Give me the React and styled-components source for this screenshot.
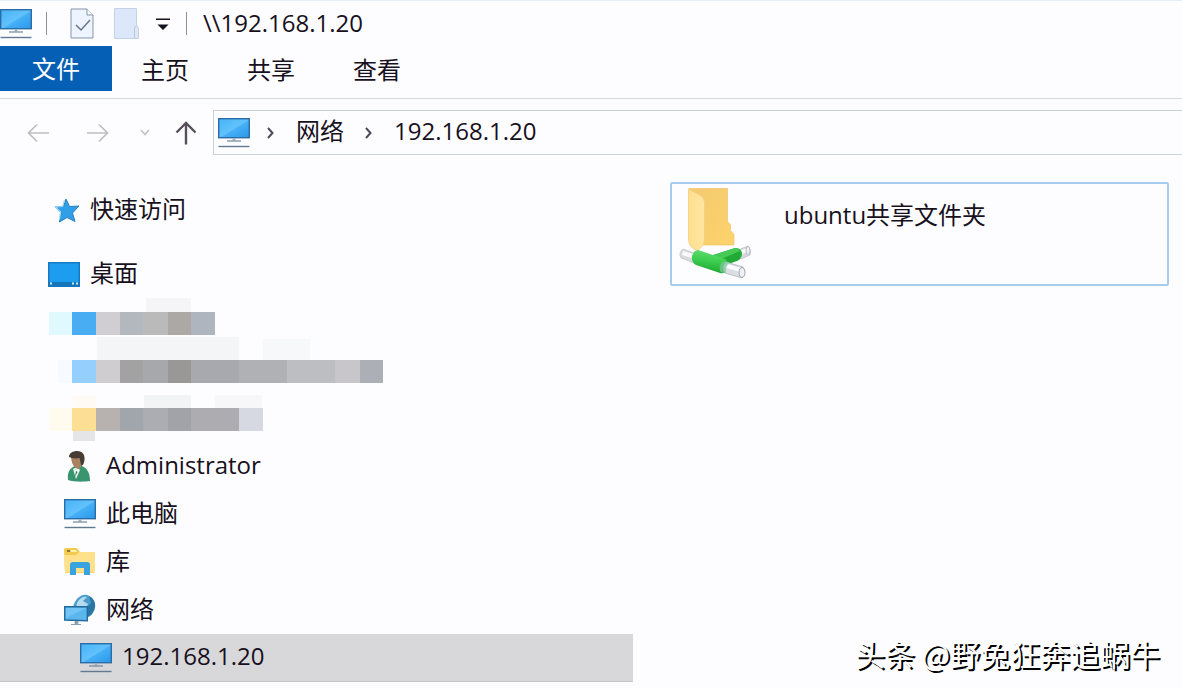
import React from "react"
import styled, { createGlobalStyle, css } from "styled-components"

const GlobalStyle = createGlobalStyle`
  * {
    box-sizing: border-box;
  }

  body {
    margin: 0;
    background: #fdfdff;
    color: #171020;
    font-family: "Open Sans", "Noto Sans CJK SC", sans-serif;
    font-size: 24px;
    line-height: 32px;
  }

  button {
    border: 0;
    background: none;
    color: inherit;
    font: inherit;
    cursor: pointer;
  }

  svg {
    display: block;
    flex: none;
  }
`

const Window = styled.div`
  display: flex;
  flex-direction: column;
  min-height: 100vh;
  border-top: 1px solid #e6eef6;
  overflow: hidden;
`

const TitleBar = styled.header`
  display: flex;
  align-items: center;
  height: 45px;
`

const QuickButton = styled.button`
  display: flex;
  padding: 0;
  margin-right: ${props => props.$gap || 0}px;
`

const Divider = styled.span`
  width: 1px;
  height: 23px;
  margin-right: ${props => props.$gap}px;
  background: #8f8c9c;
`

const Title = styled.h1`
  margin: 0;
  padding-bottom: 2px;
  font-size: 24px;
  font-weight: 400;
`

const Ribbon = styled.nav`
  display: flex;
  height: 53px;
  border-bottom: 1px solid #d3d7de;
`

const Tab = styled.button`
  height: 48px;
  padding: 0 29px;

  ${props => props.$file && css`
    height: 45px;
    padding: 0 32px;
    background: #0560b5;
    color: #fff;
  `}

  & + & {
    padding: 0 29px;
  }
`

const Toolbar = styled.div`
  display: flex;
  align-items: center;
  padding: 11px 0 10px 27px;
`

const Arrow = styled.button`
  display: flex;
  padding: 0;
  margin-right: ${props => props.$gap}px;
`

const AddressBar = styled.div`
  display: flex;
  flex: 1;
  align-items: center;
  height: 45px;
  padding: 0 0 0 4px;
  border: 1px solid #ccd2d9;
  border-right: 0;
`

const Crumb = styled.button`
  height: 43px;
  padding: 0 0 4px;
`

const Separator = styled.span`
  display: flex;
  margin: 0 ${props => props.$after}px 0 ${props => props.$before}px;
`

const Body = styled.div`
  display: grid;
  flex: 1;
  grid-template-columns: 633fr 549fr;
`

const Sidebar = styled.nav`
  display: flex;
  flex-direction: column;
  padding-top: 21px;
`

const NavItem = styled.a`
  display: flex;
  align-items: center;
  height: 48px;
  padding-left: ${props => props.$indent}px;
  margin-bottom: ${props => (props.$spaced ? 16 : 0)}px;
  gap: ${props => props.$gap || 10}px;
  color: inherit;
  text-decoration: none;
  background: ${props => (props.$selected ? "#d8d8db" : "none")};
  border-bottom: ${props => (props.$selected ? "1px solid #c4c4c8" : "0")};

  span {
    padding-bottom: 3px;
  }
`

const Content = styled.main`
  padding: 17px 13px 0 37px;
`

const Share = styled.a`
  display: flex;
  align-items: flex-start;
  height: 104px;
  padding: 4px 0 0 7px;
  gap: 33px;
  border: 2px solid #a5cbef;
  border-radius: 2px;
  color: inherit;
  text-decoration: none;
`

const ShareName = styled.span`
  padding-top: 11px;
`

const Watermark = styled.p`
  position: absolute;
  right: 22px;
  bottom: 15px;
  margin: 0;
  color: #fff;
  font-family: "Noto Sans CJK SC", sans-serif;
  font-size: 30px;
  line-height: 40px;
  text-shadow: 2px 2px 0 #000;
`

const Monitor = () => (
  <svg width="32" height="30" viewBox="0 0 32 30">
    <defs>
      <linearGradient id="screen" x1="0" y1="0" x2="1" y2="1">
        <stop offset="0" stopColor="#45b3f7" />
        <stop offset="0.5" stopColor="#62c2fc" />
        <stop offset="0.55" stopColor="#45aff6" />
        <stop offset="1" stopColor="#2b97ea" />
      </linearGradient>
    </defs>
    <rect x="0.7" y="0.7" width="30.6" height="19" fill="url(#screen)" stroke="#2c6ca5" strokeWidth="1.4" />
    <path d="M14.5 20.5h3v2h-3z" fill="#9db0be" />
    <path d="M9 23h14" stroke="#71889a" strokeWidth="1.2" />
    <path d="M0.5 28.5h31" stroke="#607a91" strokeWidth="1.4" />
  </svg>
)

const CheckedPage = () => (
  <svg width="24" height="31" viewBox="0 0 24 31">
    <path d="M1 1h16l6 6v23H1z" fill="#edf3ff" stroke="#8595ab" />
    <path d="M17 1v6h6" fill="#fff" stroke="#8595ab" />
    <path d="M6 17l5 5 9-10" fill="none" stroke="#65778f" strokeWidth="1.5" />
  </svg>
)

const BlankPage = () => (
  <svg width="25" height="31" viewBox="0 0 25 31">
    <path d="M0.5 0.5h22v17l2 2v11H.5z" fill="#dce8fa" stroke="#c3d2e8" />
    <path d="M20.5 30V20l2-2.5" fill="none" stroke="#b5c5dc" />
  </svg>
)

const Customize = () => (
  <svg width="14" height="14" viewBox="0 0 14 14" fill="#171020">
    <path d="M0 1.500h14v1.500H0zM1.500 7.500h11L7 13z" />
  </svg>
)

const Left = () => (
  <svg width="22" height="20" viewBox="0 0 22 20" fill="none" stroke="#bdbdc3" strokeWidth="1.7">
    <path d="M1.5 10H22M10 1.5L1.5 10l8.5 8.5" />
  </svg>
)

const Right = () => (
  <svg width="22" height="20" viewBox="0 0 22 20" fill="none" stroke="#bdbdc3" strokeWidth="1.7">
    <path d="M0 10h20.5M12 1.5l8.5 8.5-8.5 8.5" />
  </svg>
)

const Down = () => (
  <svg width="10" height="8" viewBox="0 0 10 8" fill="none" stroke="#c0c0c6" strokeWidth="1.5">
    <path d="M1 1l4 4.5L9 1" />
  </svg>
)

const Up = () => (
  <svg width="22" height="24" viewBox="0 0 22 24" fill="none" stroke="#584f5c" strokeWidth="2.4">
    <path d="M11 23.5V2M1.5 11.5L11 2l9.5 9.5" />
  </svg>
)

const Chevron = () => (
  <svg width="7" height="12" viewBox="0 0 7 12" fill="none" stroke="#51495a" strokeWidth="2">
    <path d="M1 1l4.5 5L1 11" />
  </svg>
)

const Star = () => (
  <svg width="26" height="25" viewBox="0 0 26 25">
    <path d="M12 1l3.500 7.500 9.500-.5-6.500 7 2.500 8.500-8-4-7.500 4.500 1.500-9L1 9l8.500-.7z" fill="#309fe8" stroke="#2b80be" />
    <path d="M10.500 2l-2 6.500-7 .5 5 5-1 7.500" fill="none" stroke="#a5dcfb" strokeWidth="1.2" />
  </svg>
)

const Desktop = () => (
  <svg width="32" height="25" viewBox="0 0 32 25">
    <rect x="0.7" y="0.7" width="30.6" height="23.6" fill="#1d9df0" stroke="#1577bd" strokeWidth="1.4" />
    <path d="M1 20h30v4H1z" fill="#1475b8" />
    <path d="M2 20.5h2v2H2zM24 20.5h2v2h-2zM28 20.5h2v2h-2z" fill="#cdeaff" />
  </svg>
)

const User = () => (
  <svg width="24" height="33" viewBox="0 0 24 33">
    <path d="M1 30c-1-8 2-12 7-14h7c5 2 8 7 8 15-6 1-17 1-22-1z" fill="#38956f" />
    <path d="M6 19l4-2 3 3-4 9z" fill="#edf5ef" />
    <path d="M8 27l1-6 1.500 1z" fill="#2d7e66" />
    <path d="M4 6c3-4 11-4 12 2 0 6-2 10-5 11-4-1-7-6-7-13z" fill="#a9825f" />
    <path d="M2 7C2 3 6 1 10 1c6 0 8 4 7.500 9-.5 3-1 5-3 6-1-2-1-5-2-8-4 1-8 0-10.500-1z" fill="#463c34" />
  </svg>
)

const Library = () => (
  <svg width="32" height="28" viewBox="0 0 32 28">
    <path d="M0 1.500q0-1.500 1.500-1.500h11l3.500 4h14.500v21H1z" fill="#f3c94e" />
    <path d="M3 2h3v2H3z" fill="#8c7638" />
    <path d="M7 2h5l1 2H7z" fill="#fff0b5" />
    <path d="M0 7h12l3.500-3H31v20.500H1z" fill="#ffe18b" />
    <path d="M6 27V17q0-3 3-3h14q3 0 3 3v10h-6v-7h-8v7z" fill="#38a3df" />
  </svg>
)

const Network = () => (
  <svg width="32" height="32" viewBox="0 0 32 32">
    <path d="M9 13C11 5 17 0 23 1c7 2 9 8 8 13-1 5-5 9-9 10H11z" fill="#4b9bcb" />
    <path d="M13 9c2-4 6-7 10-6l-4 4 5 3-2 4H12z" fill="#b4dcee" />
    <path d="M25 2c7 4 8 12 2 19l-4 2-1-9 5-5z" fill="#2b75a5" />
    <path d="M0.7 12.700h22.600v14L.7 26z" fill="#5ab7ee" stroke="#256b9d" strokeWidth="1.4" />
    <path d="M2 14h20L2 24z" fill="#83cdf8" opacity=".6" />
    <path d="M11 27.500h3v2h-3zM7 30.500h10" fill="#8ba0ae" stroke="#8ba0ae" strokeWidth="1" />
  </svg>
)

const SharedFolder = () => (
  <svg width="72" height="92" viewBox="0 0 72 92">
    <defs>
      <linearGradient id="folder" x1="0" x2="1" y2="1">
        <stop offset="0" stopColor="#f3ca70" />
        <stop offset="1" stopColor="#fdd36b" />
      </linearGradient>
      <linearGradient id="flap" x2="1" y2="0">
        <stop offset="0" stopColor="#ffdf8d" />
        <stop offset="1" stopColor="#ffe6a4" />
      </linearGradient>
      <linearGradient id="pipe" x1="0.6" y1="0" x2="0.4" y2="1">
        <stop offset="0" stopColor="#63df70" />
        <stop offset="0.5" stopColor="#3acb4d" />
        <stop offset="1" stopColor="#1ba32f" />
      </linearGradient>
    </defs>
    <path d="M10 .5h38.500v33l3 3v6l3.500 4V57H20L10 50z" fill="url(#folder)" stroke="#ecc36a" strokeWidth=".7" />
    <path d="M9.500 1l12 6.500q4 3 4 7.500v35q0 8-7 12.500-8-2-9-10z" fill="url(#flap)" stroke="#efcd7c" strokeWidth=".7" />
    <path d="M4 61l14 5-3 9-13-5q-3-5 2-9z" fill="#d8dbde" stroke="#bfc4c8" strokeWidth=".7" />
    <path d="M4 63l13 4-1 4-13-4z" fill="#f8fafb" />
    <path d="M59 62l10-4q4 4 2 9l-9 4z" fill="#d5d9de" stroke="#b8bec4" strokeWidth=".7" />
    <path d="M60 63l9-3 1 3-9 4z" fill="#f8fafb" />
    <ellipse cx="69" cy="62.500" rx="2" ry="4" fill="#edf0f4" stroke="#aab1b8" strokeWidth=".8" />
    <path d="M31 68l25-8q6 0 7 5 0 6-5 8l-14 5z" fill="#21aa36" />
    <path d="M32 68l24-8q4 0 5 3L40 72z" fill="#45cb55" />
    <path d="M19 62l27 9q5 4 2 11-2 4-7 3L17 77q-5-3-4-9 2-6 6-6z" fill="url(#pipe)" />
    <path d="M47 74l17 5q4 6-1 11l-17-5q-4-6 1-11z" fill="#d9dee2" stroke="#aeb6b9" strokeWidth=".8" />
    <path d="M48 76l14 4-1 4-14-4z" fill="#fafcfd" />
    <path d="M43 74q4-1 7 1-4 4-3 10-5 0-6-2-1-5 2-9z" fill="#79c99b" opacity=".7" />
    <ellipse cx="63" cy="84.500" rx="3" ry="5" fill="#edf0f4" stroke="#959fa6" strokeWidth=".9" />
  </svg>
)

const blocks = [
  [146, 0, 45, 14, "#f5f5f7"],
  [49, 14, 23, 23, "#e0f8ff"],
  [72, 14, 24, 23, "#49adf3"],
  [96, 14, 24, 23, "#d0ced2"],
  [120, 14, 23, 23, "#b3b7be"],
  [143, 14, 25, 23, "#bbbabb"],
  [168, 14, 23, 23, "#aca8a6"],
  [191, 14, 24, 23, "#aeb5be"],
  [97, 39, 142, 23, "#f4f5f6"],
  [263, 41, 47, 21, "#f7f8f9"],
  [58, 62, 14, 23, "#f7fbff"],
  [72, 62, 24, 23, "#94cffe"],
  [96, 62, 24, 23, "#cfcdd0"],
  [120, 62, 23, 23, "#a3a2a3"],
  [143, 62, 25, 23, "#a7a8ac"],
  [168, 62, 23, 23, "#9a9797"],
  [191, 62, 48, 23, "#a8a9ae"],
  [239, 62, 48, 23, "#b0b1b4"],
  [287, 62, 48, 23, "#bdbec2"],
  [335, 62, 25, 23, "#c8c6ca"],
  [360, 62, 23, 23, "#acafb6"],
  [73, 98, 23, 12, "#fffbf4"],
  [144, 97, 47, 13, "#f3f4f6"],
  [215, 97, 47, 13, "#f7f7f9"],
  [49, 110, 23, 23, "#fffcef"],
  [72, 110, 24, 23, "#fcdf94"],
  [96, 110, 24, 23, "#b7b2b0"],
  [120, 110, 23, 23, "#a1a5ac"],
  [143, 110, 25, 23, "#acadb2"],
  [168, 110, 23, 23, "#a2a3a8"],
  [191, 110, 48, 23, "#acacb1"],
  [239, 110, 24, 23, "#d6d9e1"],
  [73, 133, 22, 10, "#e5e5e7"],
]

const Mosaic = () => (
  <svg width="400" height="144" viewBox="0 0 400 144" aria-hidden="true" shapeRendering="crispEdges">
    {blocks.map(([x, y, width, height, fill]) => (
      <rect key={`${x}-${y}`} x={x} y={y} width={width} height={height} fill={fill} />
    ))}
  </svg>
)

const App = () => (
  <>
    <GlobalStyle />
    <Window>
      <TitleBar>
        <QuickButton aria-label="窗口" $gap={14}><Monitor /></QuickButton>
        <Divider $gap={23} />
        <QuickButton aria-label="属性" $gap={20}><CheckedPage /></QuickButton>
        <QuickButton aria-label="新建文件夹" $gap={17}><BlankPage /></QuickButton>
        <QuickButton aria-label="自定义" $gap={16}><Customize /></QuickButton>
        <Divider $gap={16} />
        <Title>\\192.168.1.20</Title>
      </TitleBar>
      <Ribbon>
        <Tab $file>文件</Tab>
        <Tab>主页</Tab>
        <Tab>共享</Tab>
        <Tab>查看</Tab>
      </Ribbon>
      <Toolbar>
        <Arrow aria-label="后退" $gap={38}><Left /></Arrow>
        <Arrow aria-label="前进" $gap={31}><Right /></Arrow>
        <Arrow aria-label="最近" $gap={25}><Down /></Arrow>
        <Arrow aria-label="向上" $gap={16}><Up /></Arrow>
        <AddressBar>
          <Monitor />
          <Separator $before={17} $after={22}><Chevron /></Separator>
          <Crumb>网络</Crumb>
          <Separator $before={21} $after={22}><Chevron /></Separator>
          <Crumb>192.168.1.20</Crumb>
        </AddressBar>
      </Toolbar>
      <Body>
        <Sidebar>
          <NavItem href="#quick" $indent={54} $spaced><Star /><span>快速访问</span></NavItem>
          <NavItem href="#desktop" $indent={48}><Desktop /><span>桌面</span></NavItem>
          <Mosaic />
          <NavItem href="#user" $indent={67} $gap={15}><User /><span>Administrator</span></NavItem>
          <NavItem href="#computer" $indent={64}><Monitor /><span>此电脑</span></NavItem>
          <NavItem href="#library" $indent={64}><Library /><span>库</span></NavItem>
          <NavItem href="#network" $indent={64}><Network /><span>网络</span></NavItem>
          <NavItem href="#host" $indent={80} $selected><Monitor /><span>192.168.1.20</span></NavItem>
        </Sidebar>
        <Content>
          <Share href="#share">
            <SharedFolder />
            <ShareName>ubuntu共享文件夹</ShareName>
          </Share>
        </Content>
      </Body>
      <Watermark>头条 @野兔狂奔追蜗牛</Watermark>
    </Window>
  </>
)

export default App
